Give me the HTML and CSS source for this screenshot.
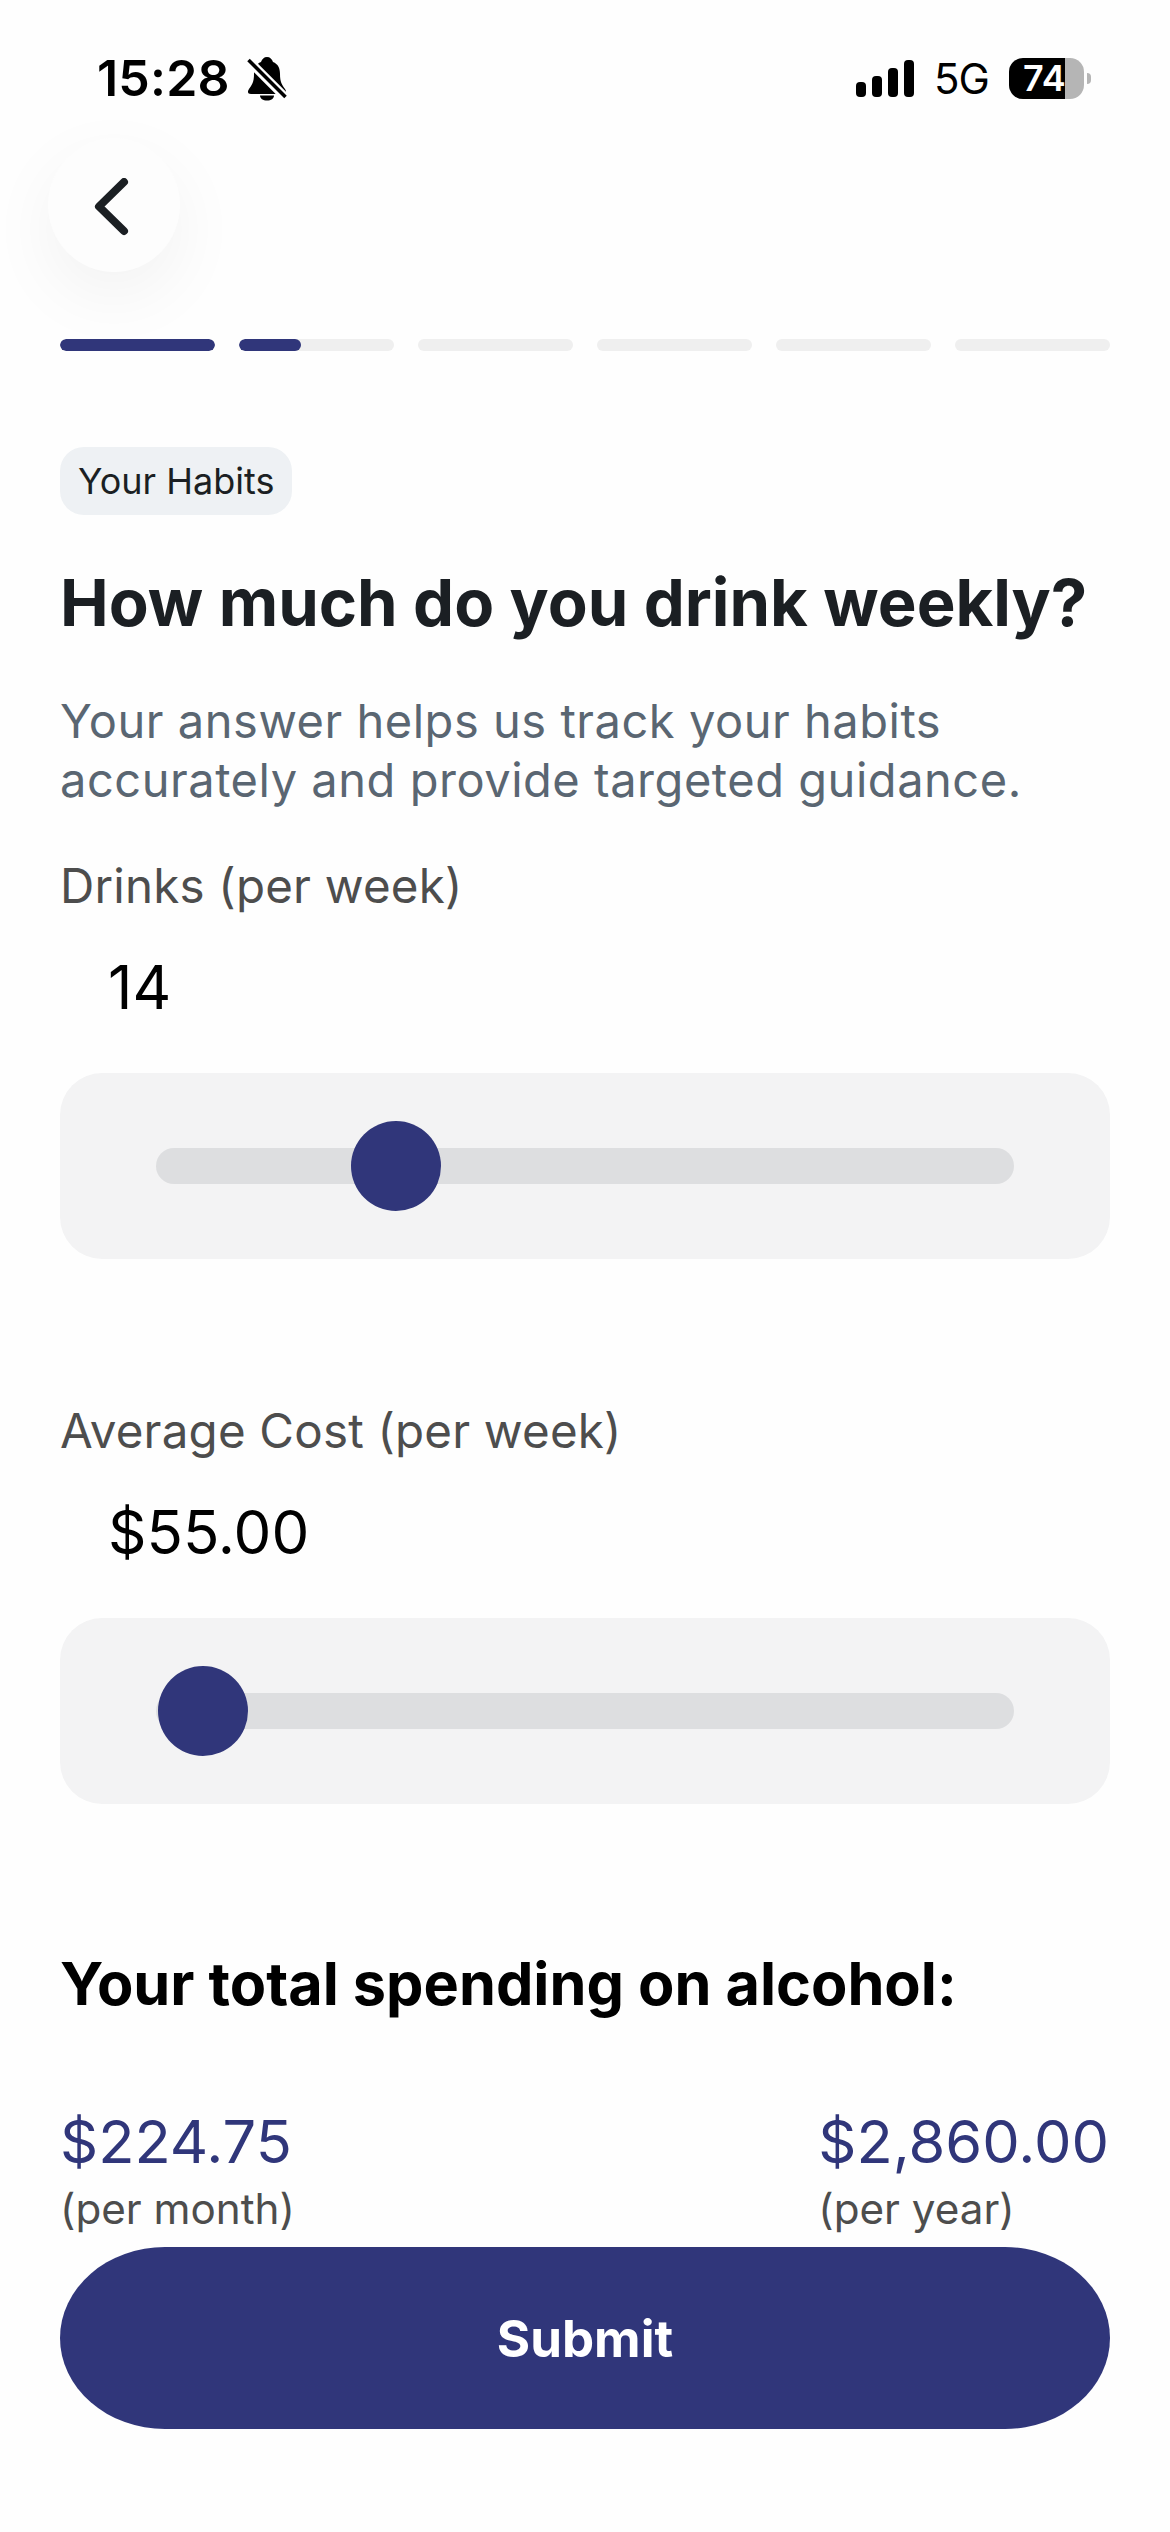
FILE: index.html
```html
<!DOCTYPE html>
<html lang="en">
<head>
<meta charset="utf-8">
<title>How much do you drink weekly?</title>
<link rel="stylesheet" href="styles.css">
</head>
<body>
<main class="screen">
  <header class="status">
    <div class="status-left">
      <span class="time">15:28</span>
      <svg class="bell" viewBox="0 0 40 44" aria-hidden="true">
        <path d="M20 0c3 0 5 2 6 5 5 2 7 6 7 12 0 8 2 11 5 15 2 3 1 5-2 5H4c-3 0-4-2-2-5 3-4 5-7 5-15 0-6 2-10 7-12 1-3 3-5 6-5z"/>
        <path d="M13 38.500h14c0 3-3 5-7 5s-7-2-7-5z"/>
        <path class="bell-gap" d="M0 2 39 41"/>
        <path class="bell-slash" d="M1.500 3 38.500 40"/>
      </svg>
    </div>
    <div class="status-right">
      <svg class="signal" viewBox="0 0 58 37" aria-hidden="true">
        <rect x="0" y="22" width="10" height="15" rx="4"/>
        <rect x="16" y="16" width="10" height="21" rx="4"/>
        <rect x="32" y="8" width="10" height="29" rx="4"/>
        <rect x="48" y="0" width="10" height="37" rx="4"/>
      </svg>
      <span class="network">5G</span>
      <div class="battery"><div class="battery-body">74</div><div class="battery-nub"></div></div>
    </div>
  </header>

  <button class="back" aria-label="Back">
    <svg class="chevron" viewBox="0 0 36 58" aria-hidden="true"><path d="M30 4 5 28.500 30 53"/></svg>
  </button>

  <div class="progress">
    <div class="seg"><div class="seg-fill seg-full"></div></div>
    <div class="seg"><div class="seg-fill seg-part"></div></div>
    <div class="seg"></div>
    <div class="seg"></div>
    <div class="seg"></div>
    <div class="seg"></div>
  </div>

  <section class="content">
    <span class="pill">Your Habits</span>
    <h1 class="title">How much do you drink weekly?</h1>
    <p class="lead">Your answer helps us track your habits<br>accurately and provide targeted guidance.</p>

    <div class="field">
      <div class="label">Drinks (per week)</div>
      <div class="value">14</div>
      <div class="slider-card">
        <div class="track"><div class="thumb thumb-drinks"></div></div>
      </div>
    </div>

    <div class="field field-cost">
      <div class="label">Average Cost (per week)</div>
      <div class="value">$55.00</div>
      <div class="slider-card">
        <div class="track"><div class="thumb thumb-cost"></div></div>
      </div>
    </div>

    <h2 class="total">Your total spending on alcohol:</h2>
    <div class="summary">
      <div>
        <div class="amount">$224.75</div>
        <div class="period">(per month)</div>
      </div>
      <div>
        <div class="amount">$2,860.00</div>
        <div class="period">(per year)</div>
      </div>
    </div>
    <button class="submit">Submit</button>
  </section>
</main>
</body>
</html>
```

FILE: styles.css
```css
* { box-sizing: border-box; }
html, body { margin: 0; padding: 0; background: #fff; }
body { font-family: Inter, "Liberation Sans", sans-serif; color: #000; }
.screen { width: 1170px; height: 2532px; overflow: hidden; background: #fefefe; }

.status { display: flex; justify-content: space-between; align-items: flex-start; height: 138px; padding: 53px 79px 0 97px; }
.status-left { display: flex; align-items: center; height: 50px; gap: 17px; }
.time { font-size: 50px; line-height: 50px; font-weight: 600; letter-spacing: .2px; }
.bell { width: 40px; height: 44px; fill: #000; margin-top: 2px; }
.bell-gap { stroke: #fefefe; stroke-width: 9; fill: none; }
.bell-slash { stroke: #000; stroke-width: 3.500; fill: none; }
.status-right { display: flex; align-items: center; height: 50px; }
.signal { width: 58px; height: 37px; fill: #000; margin: 0 20px 0 0; }
.network { font-size: 42px; line-height: 50px; font-weight: 400; width: 54px; margin: 2px 21px 0 0; letter-spacing: -1px; }
.battery { display: flex; align-items: center; }
.battery-body { width: 75px; height: 41px; border-radius: 14px; background: linear-gradient(90deg, #000 0 75%, #b5b5b5 75% 100%); color: #fff; font-size: 36px; line-height: 41px; font-weight: 600; padding-left: 14px; }
.battery-nub { width: 4px; height: 11px; margin-left: 3px; background: #b5b5b5; border-radius: 0 4px 4px 0; }

.back { display: flex; align-items: center; justify-content: center; width: 132px; height: 134px; margin: 0 0 67px 48px; padding: 0; border: 0; border-radius: 50%; background: #fdfdfd; box-shadow: 0 24px 70px rgba(0, 0, 0, .05); }
.chevron { width: 36px; height: 58px; fill: none; stroke: #1b1f23; stroke-width: 8; stroke-linecap: round; stroke-linejoin: round; margin: 3px 0 0 -5px; }

.progress { display: flex; gap: 24px; padding: 0 60px; }
.seg { flex: 1; height: 12px; border-radius: 6px; background: #efefef; overflow: hidden; }
.seg-fill { height: 100%; border-radius: 6px; background: #30367a; }
.seg-full { width: 100%; }
.seg-part { width: 40%; }

.content { padding: 96px 60px 0; }
.pill { display: inline-block; height: 68px; padding: 0 18px; border-radius: 24px; background: #eef1f4; color: #1b1f23; font-size: 36px; line-height: 68px; }
.title { margin: 48px 0 0; font-size: 65.200px; line-height: 80px; font-weight: 700; color: #1b1f23; white-space: nowrap; }
.lead { margin: 47.500px 0 0; font-size: 47px; line-height: 59px; font-weight: 380; color: #5a6672; letter-spacing: .53px; }

.field { margin-top: 47.500px; }
.field-cost { margin-top: 142px; }
.label { font-size: 47.500px; line-height: 60px; font-weight: 380; color: #4d4d4d; letter-spacing: .2px; }
.value { margin: 41px 0 0 48px; font-size: 60px; line-height: 60px; font-weight: 380; color: #000; }
.slider-card { display: flex; align-items: center; height: 186px; margin-top: 56px; padding: 0 96px; border-radius: 42px; background: #f3f3f4; }
.track { position: relative; flex: 1; height: 36px; border-radius: 18px; background: #dddee0; }
.thumb { position: absolute; top: -27px; width: 90px; height: 90px; border-radius: 50%; background: #30367a; }
.thumb-drinks { left: 195px; }
.thumb-cost { left: 2px; }

.total { margin: 144px 0 0; font-size: 59.400px; line-height: 70px; font-weight: 700; color: #000; white-space: nowrap; }
.summary { display: flex; justify-content: space-between; margin-top: 88px; padding-right: 1px; }
.amount { font-size: 59.500px; line-height: 70px; font-weight: 380; color: #30367a; }
.period { margin-top: 8px; font-size: 42.200px; line-height: 50px; font-weight: 380; color: #4d4d4d; }
.submit { display: block; width: 100%; height: 182px; margin-top: 13px; padding: 0; border: 0; border-radius: 105px / 91px; background: #30367a; color: #fff; font-family: inherit; font-size: 51px; font-weight: 700; }
```
